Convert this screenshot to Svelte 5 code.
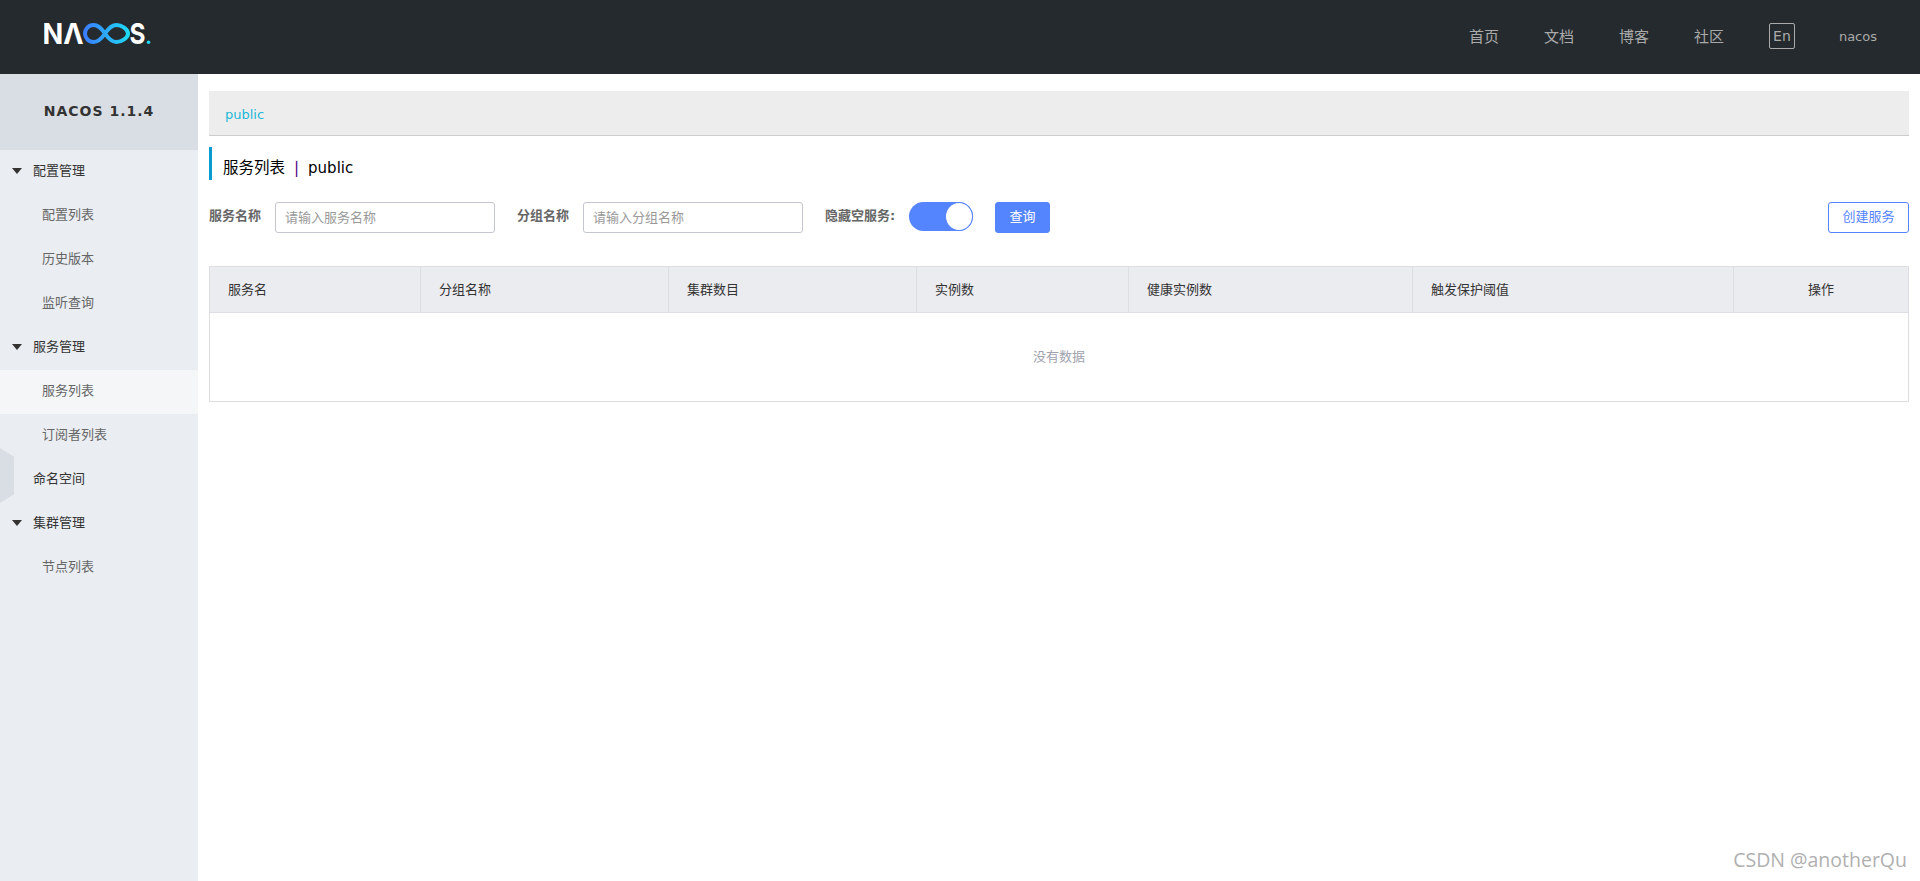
<script lang="ts">
  type Row = { label: string; level: number; arrow?: boolean; active?: boolean };

  const nav = ['首页', '文档', '博客', '社区'];

  const menu: Row[] = [
    { label: '配置管理', level: 0, arrow: true },
    { label: '配置列表', level: 1 },
    { label: '历史版本', level: 1 },
    { label: '监听查询', level: 1 },
    { label: '服务管理', level: 0, arrow: true },
    { label: '服务列表', level: 1, active: true },
    { label: '订阅者列表', level: 1 },
    { label: '命名空间', level: 0 },
    { label: '集群管理', level: 0, arrow: true },
    { label: '节点列表', level: 1 }
  ];

  const columns = [
    { title: '服务名', width: 211 },
    { title: '分组名称', width: 248 },
    { title: '集群数目', width: 248 },
    { title: '实例数', width: 212 },
    { title: '健康实例数', width: 284 },
    { title: '触发保护阈值', width: 321 },
    { title: '操作', width: 175 }
  ];
</script>

<div class="page">
  <header class="topbar">
    <svg class="logo" width="108" height="40" viewBox="0 0 108 40" aria-label="NACOS">
      <defs>
        <linearGradient id="inf" gradientUnits="userSpaceOnUse" x1="40" x2="86" y1="0" y2="0">
          <stop offset="0" stop-color="#3b7cff" />
          <stop offset="1" stop-color="#1ddcf5" />
        </linearGradient>
      </defs>
      <text class="logo-text" x="-1.500" y="27" textLength="41" lengthAdjust="spacingAndGlyphs">NΛ</text>
      <path
        d="M61 16.500C57 10.500 54 8 49.500 8 44.500 8 41 12 41 16.500S44.500 25 49.500 25C54 25 57 22.500 61 16.500 65 10.500 68 8 72.500 8 77.500 8 84 12 84 16.500S77.500 25 72.500 25C68 25 65 22.500 61 16.500Z"
        fill="none"
        stroke="url(#inf)"
        stroke-width="4"
      />
      <text class="logo-text" x="85.500" y="27" textLength="16" lengthAdjust="spacingAndGlyphs">S</text>
      <circle cx="104.500" cy="25.300" r="1.800" fill="#1ddcf5" />
    </svg>
    <nav class="links">
      {#each nav as item}
        <span class="link">{item}</span>
      {/each}
      <span class="lang">En</span>
      <span class="user">nacos</span>
    </nav>
  </header>

  <div class="body">
    <aside class="sidebar">
      <div class="version">NACOS 1.1.4</div>
      <ul class="menu">
        {#each menu as row}
          <li class="row" class:sub={row.level === 1} class:active={row.active}>
            {#if row.arrow}<span class="arrow"></span>{/if}
            {row.label}
          </li>
        {/each}
      </ul>
      <span class="handle"></span>
    </aside>

    <main class="content">
      <div class="crumb"><span>public</span></div>

      <h1 class="title">服务列表<span class="sep">|</span><span class="ns">public</span></h1>

      <div class="filters">
        <label class="label" for="svc">服务名称</label>
        <input id="svc" class="field" placeholder="请输入服务名称" />
        <label class="label group" for="grp">分组名称</label>
        <input id="grp" class="field" placeholder="请输入分组名称" />
        <span class="label hide">隐藏空服务:</span>
        <span class="switch"><span class="thumb"></span></span>
        <button class="btn primary">查询</button>
        <button class="btn outline">创建服务</button>
      </div>

      <table class="grid">
        <colgroup>
          {#each columns as col}
            <col style="width: {col.width}px" />
          {/each}
        </colgroup>
        <thead>
          <tr>
            {#each columns as col, i}
              <th class:center={i === columns.length - 1}>{col.title}</th>
            {/each}
          </tr>
        </thead>
        <tbody>
          <tr>
            <td class="empty" colspan={columns.length}>没有数据</td>
          </tr>
        </tbody>
      </table>
    </main>
  </div>

  <div class="watermark">CSDN @anotherQu</div>
</div>

<style>
  :global(body) {
    margin: 0;
    background: #fff;
    font-family: "DejaVu Sans", "Noto Sans CJK SC", sans-serif;
  }

  .page {
    position: relative;
    height: 881px;
    overflow: hidden;
    display: flex;
    flex-direction: column;
  }

  .topbar {
    height: 74px;
    flex: none;
    background: #252a2f;
    display: flex;
    align-items: center;
    justify-content: space-between;
    padding: 0 43px 0 44px;
  }

  .logo-text {
    font-family: Inter, sans-serif;
    font-weight: 700;
    font-size: 29px;
    fill: #fff;
  }

  .links {
    display: flex;
    align-items: center;
    color: #aaa;
    margin-top: -2px;
  }

  .link {
    font-size: 15px;
    width: 75px;
    margin-bottom: 2px;
  }

  .lang {
    box-sizing: border-box;
    width: 26px;
    height: 26px;
    line-height: 24px;
    text-align: center;
    font-size: 14px;
    border: 1px solid #aaa;
    border-radius: 2px;
    margin-right: 44px;
  }

  .user {
    font-size: 13px;
  }

  .body {
    flex: 1;
    display: flex;
    min-height: 0;
  }

  .sidebar {
    position: relative;
    width: 198px;
    flex: none;
    background: #eaedf1;
  }

  .version {
    height: 76px;
    line-height: 74px;
    background: #d9dee4;
    text-align: center;
    font-size: 14px;
    font-weight: 700;
    letter-spacing: 1px;
    color: #333;
  }

  .menu {
    list-style: none;
    margin: 0;
    padding: 0;
  }

  .row {
    position: relative;
    height: 44px;
    line-height: 42px;
    padding-left: 33px;
    font-size: 13px;
    color: #333;
  }

  .row.sub {
    padding-left: 42px;
    color: #666;
  }

  .row.active {
    background: #f4f6f8;
  }

  .arrow {
    position: absolute;
    left: 12px;
    top: 18px;
    width: 0;
    height: 0;
    border-left: 5.5px solid transparent;
    border-right: 5.5px solid transparent;
    border-top: 6px solid #333;
  }

  .handle {
    position: absolute;
    left: 0;
    top: 374px;
    width: 14px;
    height: 55px;
    background: #d9dee4;
    clip-path: polygon(0 0, 100% 16%, 100% 84%, 0 100%);
  }

  .content {
    flex: 1;
    min-width: 0;
    padding: 17px 11px 0;
  }

  .crumb {
    box-sizing: border-box;
    height: 45px;
    background: #ededed;
    border-bottom: 1px solid #ccc;
    padding-left: 16px;
    line-height: 47px;
    font-size: 13px;
    color: #1bb8d8;
  }

  .title {
    margin: 11px 0 0;
    height: 33px;
    line-height: 43px;
    border-left: 3px solid #0a9bd0;
    padding-left: 11px;
    font-size: 15.500px;
    font-weight: 400;
    color: #000;
    overflow: visible;
  }

  .sep {
    color: #4b0082;
    margin: 0 9px;
    font-size: 15px;
  }

  .ns {
    color: #000;
    font-size: 15px;
  }

  .filters {
    display: flex;
    align-items: flex-start;
    margin-top: 22px;
    height: 31px;
  }

  .label {
    font-size: 13px;
    font-weight: 700;
    color: #666;
    line-height: 27px;
    width: 66px;
    flex: none;
  }

  .group {
    margin-left: 22px;
  }

  .hide {
    margin-left: 22px;
    width: 84px;
  }

  .field {
    box-sizing: border-box;
    width: 220px;
    height: 31px;
    border: 1px solid #c4c6cf;
    border-radius: 3px;
    padding: 0 9px;
    font-family: inherit;
    font-size: 13px;
    outline: none;
  }

  .field::placeholder {
    color: #999;
  }

  .switch {
    box-sizing: border-box;
    position: relative;
    width: 64px;
    height: 29px;
    border-radius: 15px;
    background: #5584ff;
    flex: none;
  }

  .thumb {
    position: absolute;
    right: 0;
    top: 0;
    box-sizing: border-box;
    width: 28px;
    height: 29px;
    border-radius: 50%;
    background: #fff;
    border: 1px solid #5584ff;
  }

  .btn {
    box-sizing: border-box;
    height: 31px;
    border-radius: 3px;
    font-family: inherit;
    font-size: 13px;
    padding: 0 0 4px;
  }

  .primary {
    width: 55px;
    margin-left: 22px;
    background: #5584ff;
    border: 1px solid #5584ff;
    color: #fff;
  }

  .outline {
    width: 81px;
    margin-left: auto;
    background: #fff;
    border: 1px solid #5584ff;
    color: #5584ff;
  }

  .grid {
    box-sizing: border-box;
    width: 1699px;
    table-layout: fixed;
    border-collapse: collapse;
    margin-top: 33px;
    border: 1px solid #dcdee3;
  }

  th {
    box-sizing: border-box;
    height: 46px;
    padding: 0 0 3px 18px;
    background: #ebecf0;
    border: 1px solid #dcdee3;
    text-align: left;
    font-size: 13px;
    font-weight: 400;
    color: #333;
  }

  th.center {
    padding: 0 0 3px;
    text-align: center;
  }

  .empty {
    box-sizing: border-box;
    height: 89px;
    text-align: center;
    font-size: 13px;
    color: #a0a2ad;
    padding: 0 0 4px;
  }

  .watermark {
    position: absolute;
    right: 13px;
    bottom: 8px;
    font-family: "Open Sans", sans-serif;
    font-size: 19.500px;
    color: #b0b0b0;
  }
</style>
